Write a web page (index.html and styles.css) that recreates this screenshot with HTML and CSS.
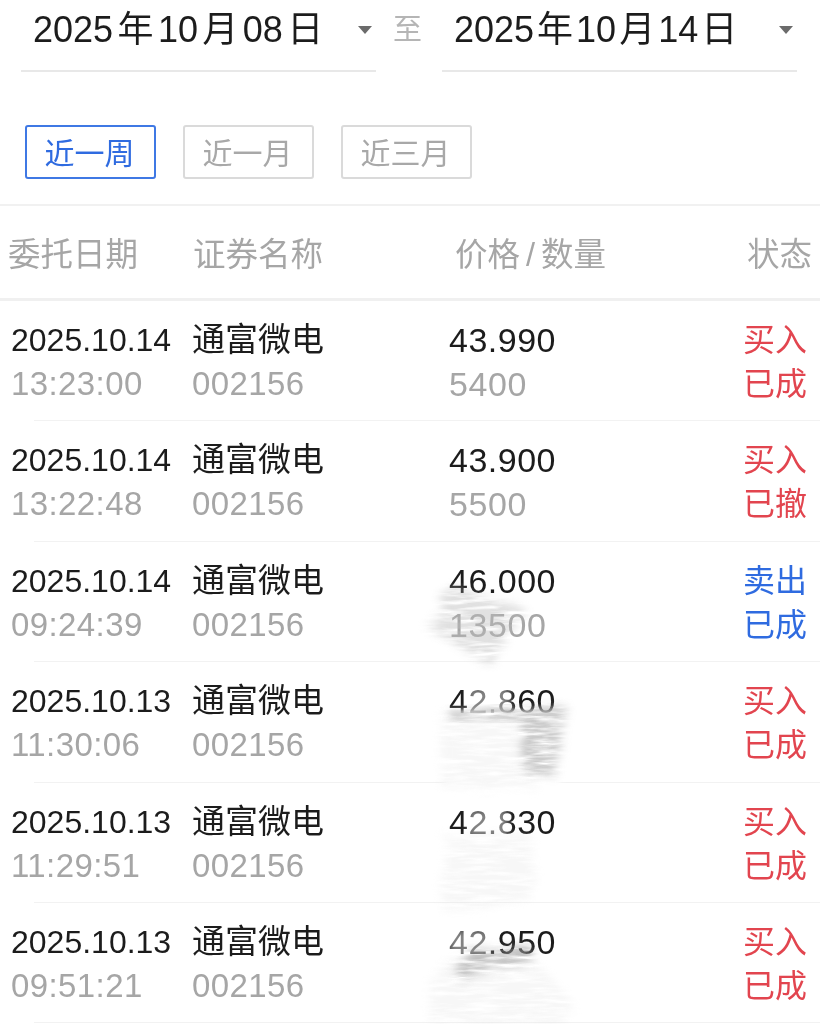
FILE: index.html
```html
<!DOCTYPE html>
<html lang="zh">
<head>
<meta charset="utf-8">
<title>委托查询</title>
<link rel="stylesheet" href="styles.css">
</head>
<body>
<main class="page">
  <section class="dates">
    <div class="field"><span class="date">2025 年 10 月 08 日</span><i class="caret"></i></div>
    <span class="to">至</span>
    <div class="field"><span class="date narrow">2025 年 10 月 14 日</span><i class="caret"></i></div>
  </section>
  <section class="ranges">
    <button class="range on">近一周</button>
    <button class="range">近一月</button>
    <button class="range">近三月</button>
  </section>
  <section class="head">
    <span>委托日期</span><span>证券名称</span><span>价格 / 数量</span><span class="end">状态</span>
  </section>
  <section class="list">
    <article class="row"><div><p>2025.10.14</p><p class="sub">13:23:00</p></div><div class="sec"><p class="name">通富微电</p><p class="sub">002156</p></div><div class="price"><p>43.990</p><p class="sub">5400</p></div><div class="state buy"><p>买入</p><p>已成</p></div></article>
    <article class="row"><div><p>2025.10.14</p><p class="sub">13:22:48</p></div><div class="sec"><p class="name">通富微电</p><p class="sub">002156</p></div><div class="price"><p>43.900</p><p class="sub">5500</p></div><div class="state buy"><p>买入</p><p>已撤</p></div></article>
    <article class="row"><div><p>2025.10.14</p><p class="sub">09:24:39</p></div><div class="sec"><p class="name">通富微电</p><p class="sub">002156</p></div><div class="price"><p>46.000</p><p class="sub">13500</p></div><div class="state sell"><p>卖出</p><p>已成</p></div></article>
    <article class="row"><div><p>2025.10.13</p><p class="sub">11:30:06</p></div><div class="sec"><p class="name">通富微电</p><p class="sub">002156</p></div><div class="price"><p>42.860</p></div><div class="state buy"><p>买入</p><p>已成</p></div></article>
    <article class="row"><div><p>2025.10.13</p><p class="sub">11:29:51</p></div><div class="sec"><p class="name">通富微电</p><p class="sub">002156</p></div><div class="price"><p>42.830</p></div><div class="state buy"><p>买入</p><p>已成</p></div></article>
    <article class="row"><div><p>2025.10.13</p><p class="sub">09:51:21</p></div><div class="sec"><p class="name">通富微电</p><p class="sub">002156</p></div><div class="price"><p>42.950</p></div><div class="state buy"><p>买入</p><p>已成</p></div></article>
  </section>
  <svg class="smudge" viewBox="0 0 820 1024" width="820" height="1024" aria-hidden="true">
    <defs>
      <filter id="rough" x="-20%" y="-20%" width="140%" height="140%">
        <feTurbulence type="fractalNoise" baseFrequency="0.03 0.25" numOctaves="3" seed="4" result="n"/>
        <feDisplacementMap in="SourceGraphic" in2="n" scale="20" result="d"/>
        <feGaussianBlur in="d" stdDeviation="4" result="b"/>
        <feColorMatrix in="n" type="matrix" values="0 0 0 0 0  0 0 0 0 0  0 0 0 0 0  2.6 0 0 0 -0.55" result="m"/>
        <feComposite in="b" in2="m" operator="in"/>
      </filter>
      <filter id="soft" x="-20%" y="-20%" width="140%" height="140%">
        <feGaussianBlur stdDeviation="3"/>
      </filter>
    </defs>
    <polygon class="s-mid" filter="url(#rough)" points="440,597 457,587 527,610 500,647 490,665 428,630 443,613"/>
    <rect class="s-white" filter="url(#soft)" x="445" y="711" width="115" height="78"/>
    <rect class="s-fade" filter="url(#soft)" x="468" y="688" width="42" height="26"/>
    <rect class="s-light" filter="url(#rough)" x="440" y="716" width="95" height="72"/>
    <polygon class="s-dark" filter="url(#rough)" points="520,708 567,706 560,740 554,775 524,772"/>
    <polygon class="s-dark2" filter="url(#rough)" points="450,712 525,707 525,716 450,720"/>
    <rect class="s-fade" filter="url(#soft)" x="468" y="810" width="40" height="26"/>
    <polygon class="s-light" filter="url(#rough)" points="445,836 530,835 535,880 530,900 442,912"/>
    <rect class="s-fade" filter="url(#soft)" x="449" y="930" width="40" height="28"/>
    <polygon class="s-light" filter="url(#rough)" points="430,985 450,955 530,955 575,1005 560,1024 430,1024"/>
    <polygon class="s-dark2" filter="url(#rough)" points="456,970 470,950 532,946 532,960 480,968 462,982"/>
  </svg>
</main>
</body>
</html>
```
FILE: styles.css
```css
* { box-sizing: border-box; }
html, body { margin: 0; padding: 0; background: #fff; }
.page {
  position: relative;
  width: 820px;
  height: 1024px;
  overflow: hidden;
  font-family: "Liberation Sans", "Noto Sans CJK SC", sans-serif;
  color: #1c1c1c;
  filter: blur(0.5px);
}
p { margin: 0; }
.dates {
  display: flex;
  align-items: flex-start;
  height: 125px;
  padding: 0 22px 0 21px;
}
.field {
  position: relative;
  flex: 0 0 355px;
  height: 72px;
  padding: 8px 0 0 12px;
  border-bottom: 2px solid #e8e8e8;
}
.date { font-size: 36px; line-height: 44px; white-space: nowrap; word-spacing: -5.6px; }
.date.narrow { word-spacing: -7px; }
.caret {
  position: absolute;
  right: 4px;
  top: 26px;
  border-left: 7px solid transparent;
  border-right: 7px solid transparent;
  border-top: 8px solid #6b6b6b;
}
.to {
  flex: 0 0 66px;
  padding: 9px 0 0 17px;
  font-size: 29px;
  line-height: 42px;
  color: #b5b5b5;
}
.ranges {
  display: flex;
  gap: 27px;
  height: 81px;
  padding-left: 25px;
  border-bottom: 2px solid #f1f1f1;
}
.range {
  width: 131px;
  height: 54px;
  padding: 0 2px 2px 0;
  font: inherit;
  font-size: 30px;
  color: #a8a8a8;
  background: #fff;
  border: 2px solid #dadada;
  border-radius: 3px;
}
.range.on { color: #2f6be0; border-color: #3f78e4; }
.head {
  display: grid;
  grid-template-columns: 185px 262px 292px 65px;
  align-items: center;
  height: 95px;
  padding: 0 0 2px 8px;
  font-size: 32.5px;
  color: #a6a6a6;
  border-bottom: 3px solid #f0f0f0;
}
.head span { white-space: nowrap; }
.head span:nth-child(3) { word-spacing: -3px; }
.head .end { text-align: right; }
.list { display: flex; flex-direction: column; }
.row {
  position: relative;
  display: grid;
  grid-template-columns: 181px 257px 1fr 64px;
  flex: 0 0 120.4px;
  padding: 17px 13px 0 11px;
  font-size: 32px;
  line-height: 44px;
}
.row::after {
  content: "";
  position: absolute;
  left: 34px;
  right: 0;
  bottom: 0;
  height: 1px;
  background: #f2f2f2;
}
.row p { white-space: nowrap; }
.row .sub { color: #a6a6a6; font-size: 33px; letter-spacing: 0.4px; }
.name { font-size: 33px; }
.price p { font-size: 34px; letter-spacing: 0.5px; }
.row .price .sub { font-size: 34px; letter-spacing: 0.6px; }
.state { text-align: right; }
.buy { color: #e2454f; }
.sell { color: #2f6be0; }
.smudge { position: absolute; left: 0; top: 0; pointer-events: none; }
.s-mid { fill: #bcbcbc; opacity: 0.45; }
.s-white { fill: #fff; }
.s-fade { fill: #fff; opacity: 0.45; }
.s-light { fill: #dcdcdc; opacity: 0.22; }
.s-dark { fill: #a4a4a4; opacity: 0.55; }
.s-dark2 { fill: #989898; opacity: 0.6; }
```
